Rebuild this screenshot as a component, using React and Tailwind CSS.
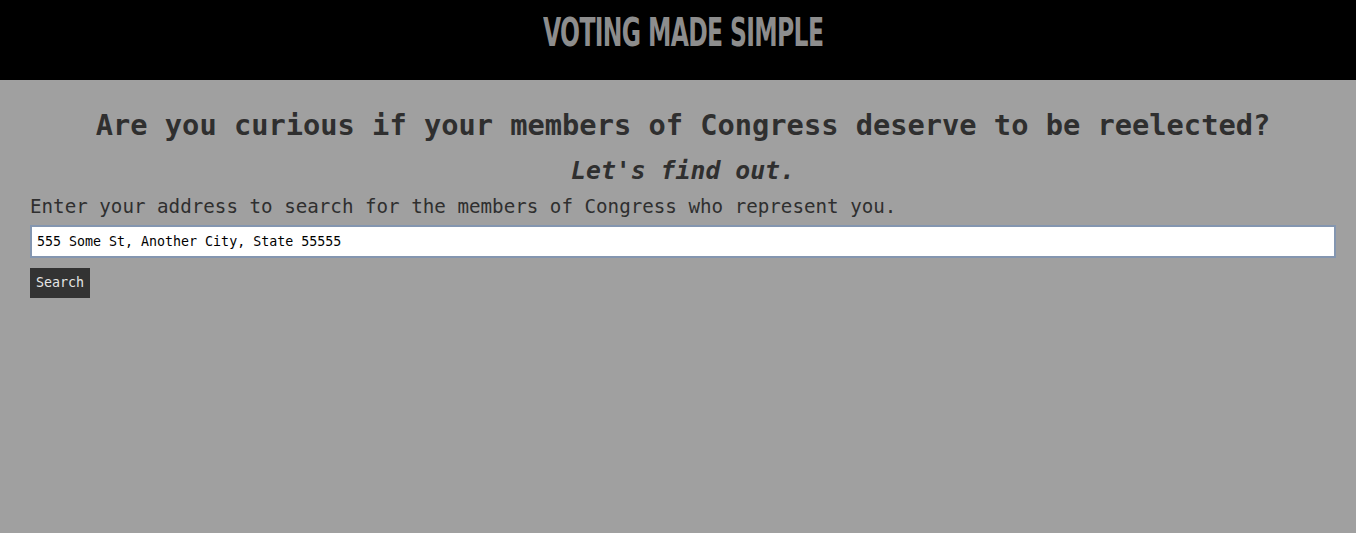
import React, { useState } from 'react'

const App = () => {
  const [address, setAddress] = useState('555 Some St, Another City, State 55555')

  return (
    <div className="min-h-[533px] bg-[#a0a0a0] text-[#2f2f2f] font-['DejaVu_Sans_Mono','Liberation_Mono',monospace]">
      {/* Header bar */}
      <header className="h-20 bg-black flex justify-center items-start pt-[13px] pl-[10px]">
        <h1 className="font-['DejaVu_Sans_Condensed','DejaVu_Sans',sans-serif] font-bold text-[39px] leading-none text-[#8d8d8d] tracking-[-1px] scale-x-[0.67]">
          VOTING MADE SIMPLE
        </h1>
      </header>

      {/* Search area */}
      <main className="pl-[30px] pr-[20px] pt-[27px]">
        <h2 className="text-center text-[28.7px] font-bold leading-9">
          Are you curious if your members of Congress deserve to be reelected?
        </h2>
        <h3 className="text-center text-[24.8px] font-bold italic leading-8 mt-[12px]">
          Let's find out.
        </h3>
        <p className="text-[19.2px] leading-6 mt-[8px]">
          Enter your address to search for the members of Congress who represent you.
        </p>
        <input
          className="mt-[6px] w-full h-[33px] bg-white border-2 border-[#8496b0] px-[5px] text-[13.3px] text-black outline-none"
          value={address}
          onChange={(e) => setAddress(e.target.value)}
        />
        <button className="mt-[10px] block h-[30px] px-[6px] bg-[#333333] text-[#e6e6e6] text-[13.3px]">
          Search
        </button>
      </main>
    </div>
  )
}

export default App
